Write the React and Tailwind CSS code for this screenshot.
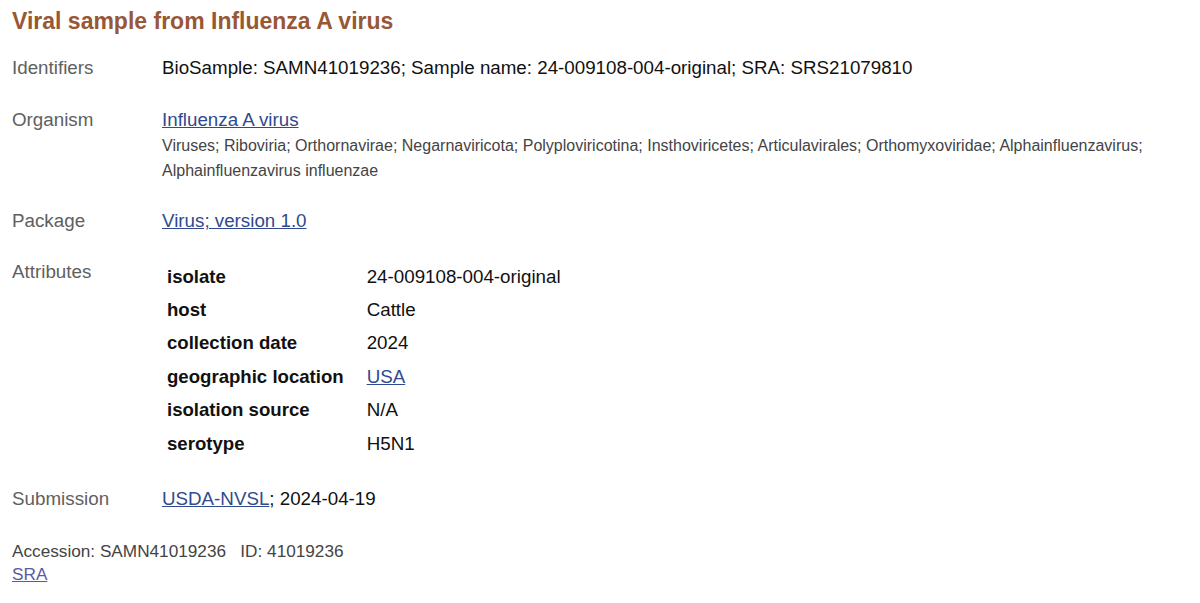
import React from 'react';

const attributes = [
    { name: 'isolate', value: '24-009108-004-original' },
    { name: 'host', value: 'Cattle' },
    { name: 'collection date', value: '2024' },
    { name: 'geographic location', value: 'USA', link: true },
    { name: 'isolation source', value: 'N/A' },
    { name: 'serotype', value: 'H5N1' },
];

const Row = ({ label, children, className = '' }) => (
    <div className={`flex ${className}`}>
        <div className="w-[150px] shrink-0 text-[18.8px] leading-[26px] text-[#606060]">{label}</div>
        <div className="flex-1 min-w-0">{children}</div>
    </div>
);

const App = () => {
    return (
        <div className="min-h-screen bg-white px-[12px] font-['Liberation_Sans',Arial,sans-serif] text-[#111]">
            <h1 className="mt-[6px] text-[23px] leading-[30px] font-bold text-[#985735]">
                Viral sample from Influenza A virus
            </h1>

            <Row label="Identifiers" className="mt-[19px]">
                <div className="text-[18.75px] leading-[26px]">
                    BioSample: SAMN41019236; Sample name: 24-009108-004-original; SRA: SRS21079810
                </div>
            </Row>

            <Row label="Organism" className="mt-[26px]">
                <a href="#" className="text-[18.75px] leading-[26px] text-[#2f4a8f] underline">
                    Influenza A virus
                </a>
                <div className="text-[16px] leading-[25px] text-[#444] pr-[20px]">
                    Viruses; Riboviria; Orthornavirae; Negarnaviricota; Polyploviricotina; Insthoviricetes; Articulavirales; Orthomyxoviridae; Alphainfluenzavirus; Alphainfluenzavirus influenzae
                </div>
            </Row>

            <Row label="Package" className="mt-[25px]">
                <a href="#" className="text-[18.75px] leading-[26px] text-[#2f4a8f] underline">
                    Virus; version 1.0
                </a>
            </Row>

            <Row label="Attributes" className="mt-[25px]">
                <table className="mt-[1px] border-separate border-spacing-0">
                    <tbody>
                        {attributes.map((a) => (
                            <tr key={a.name}>
                                <td className="pl-[5px] pr-[23px] h-[33.4px] text-[18.6px] leading-[26px] font-bold align-middle whitespace-nowrap">
                                    {a.name}
                                </td>
                                <td className="h-[33.4px] text-[18.75px] leading-[26px] align-middle">
                                    {a.link ? (
                                        <a href="#" className="text-[#2f4a8f] underline">{a.value}</a>
                                    ) : (
                                        a.value
                                    )}
                                </td>
                            </tr>
                        ))}
                    </tbody>
                </table>
            </Row>

            <Row label="Submission" className="mt-[26px]">
                <div className="text-[18.75px] leading-[26px]">
                    <a href="#" className="text-[#2f4a8f] underline">USDA-NVSL</a>; 2024-04-19
                </div>
            </Row>

            <div className="mt-[28px] text-[17.2px] leading-[23px] text-[#444]">
                Accession: SAMN41019236&nbsp;&nbsp;&nbsp;ID: 41019236
            </div>
            <a href="#" className="block w-fit text-[17.2px] leading-[22px] text-[#5a5aa0] underline">
                SRA
            </a>
        </div>
    );
};

export default App;
